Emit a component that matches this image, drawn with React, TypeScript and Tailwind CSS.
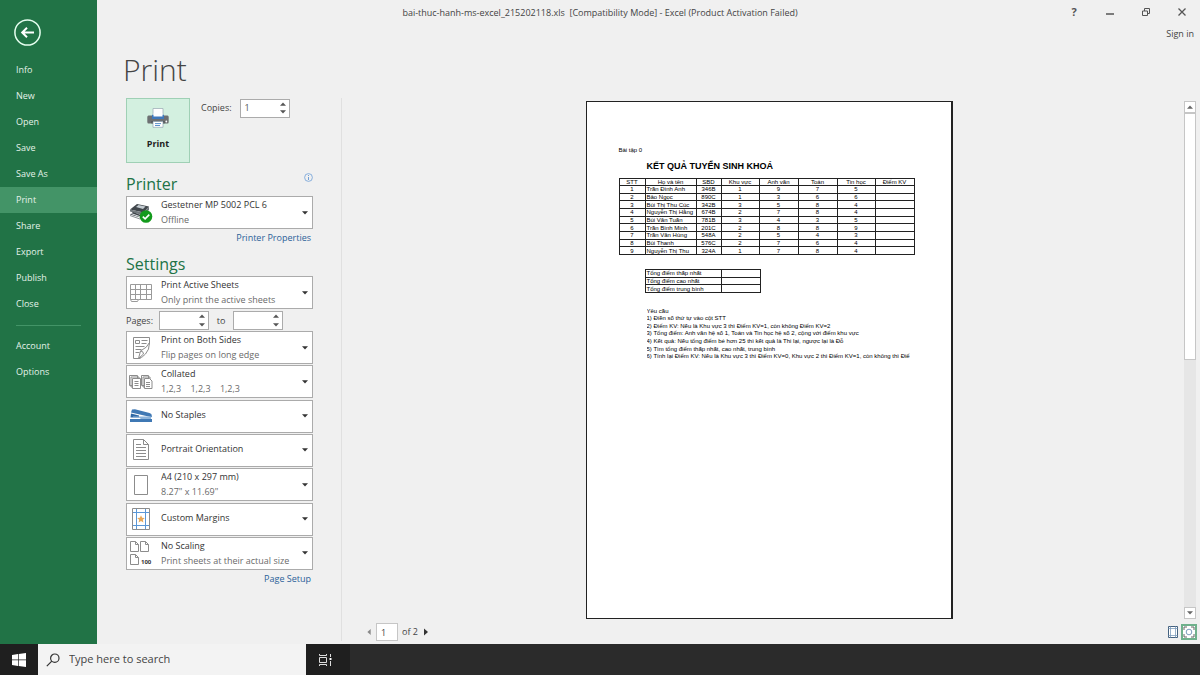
import React from "react";

const menu = ["Info", "New", "Open", "Save", "Save As", "Print", "Share", "Export", "Publish", "Close"];
const lowerMenu = ["Account", "Options"];

const heads = ["STT", "Họ và tên", "SBD", "Khu vực", "Anh văn", "Toán", "Tin học", "Điểm KV"];
const rows = [
  ["1", "Trần Đình Anh", "346B", "1", "9", "7", "5", ""],
  ["2", "Bảo Ngọc", "890C", "1", "3", "6", "6", ""],
  ["3", "Bùi Thị Thu Cúc", "342B", "3", "5", "8", "4", ""],
  ["4", "Nguyễn Thị Hằng", "674B", "2", "7", "8", "4", ""],
  ["5", "Bùi Văn Tuấn", "781B", "3", "4", "3", "5", ""],
  ["6", "Trần Bình Minh", "201C", "2", "8", "8", "9", ""],
  ["7", "Trần Văn Hùng", "548A", "2", "5", "4", "3", ""],
  ["8", "Bùi Thanh", "576C", "2", "7", "6", "4", ""],
  ["9", "Nguyễn Thị Thu", "324A", "1", "7", "8", "4", ""],
];
const notes = [
  "Yêu cầu",
  "1) Điền số thứ tự vào cột STT",
  "2) Điểm KV: Nếu là Khu vực 3 thì Điểm KV=1, còn không Điểm KV=2",
  "3) Tổng điểm: Anh văn hệ số 1, Toán và Tin học hệ số 2, cộng với điểm khu vực",
  "4) Kết quả: Nếu tổng điểm bé hơn 25 thì kết quả là Thi lại, ngược lại là Đỗ",
  "5) Tìm tổng điểm thấp nhất, cao nhất, trung bình",
  "6) Tính lại Điểm KV: Nếu là Khu vực 3 thì Điểm KV=0, Khu vực 2 thì Điểm KV=1, còn không thì Điể",
];

function Caret({ className = "" }: { className?: string }) {
  return (
    <svg viewBox="0 0 6 4" className={`h-1 w-1.5 shrink-0 ${className}`} aria-hidden="true">
      <path d="M0 0.3h6L3 3.6z" fill="currentColor" />
    </svg>
  );
}

function PrinterIcon() {
  return (
    <svg viewBox="0 0 22 20" className="h-5 w-[22px]" aria-hidden="true">
      <path d="M6 0.500h10v8H6z" fill="#fff" stroke="#9fb0b8" strokeWidth="0.800" />
      <path d="M1.500 7.500h19q1.200 0 1.200 1.500v5q0 1.500-1.200 1.500h-19Q.3 15.500.3 14V9q0-1.500 1.200-1.500z" fill="#6d7072" />
      <path d="M5 6.800h12v4.200H5z" fill="#3f79bb" />
      <path d="M6.500 5.500h9v3h-9z" fill="#fff" />
      <path d="M4.500 13h13v2.500h-13z" fill="#4d5052" />
      <path d="M6 13.500h10v5.800H6z" fill="#fff" stroke="#8fa3b3" strokeWidth="0.700" />
      <path d="M8 15.600h6M8 17.500h5" stroke="#4a86c5" strokeWidth="0.900" />
      <circle cx="19.300" cy="13.500" r="0.900" fill="#fff" />
    </svg>
  );
}

function DeviceIcon() {
  return (
    <svg viewBox="0 0 24 20" className="h-5 w-6" aria-hidden="true">
      <path d="M1 6.500 8 1l12 2.500-5.500 6z" fill="#41474c" />
      <path d="M7 4 9.500 2l7 1.500-2.500 2.500z" fill="#c4ccd2" />
      <path d="M1 6.500v2L13 12l7-5V3.500l-5.500 6z" fill="#70777c" />
      <path d="M1 11.500 4 9l9 3.500v2.500z" fill="#3b4146" />
      <path d="M2 10.500 12 14" stroke="#dfe4e8" strokeWidth="1" />
      <path d="m1 12.500 10 3.500" stroke="#8a9095" strokeWidth="1" />
      <circle cx="17" cy="13.500" r="6.300" fill="#139a1c" />
      <path d="m13.800 13.600 2.300 2.300 4.200-4.300" fill="none" stroke="#fff" strokeWidth="1.600" />
    </svg>
  );
}

function SheetsIcon() {
  return (
    <svg viewBox="0 0 24 20" className="h-5 w-6" fill="none" stroke="#9a9a9a" strokeWidth="1" aria-hidden="true">
      <path d="M1.500 1.500h21v15h-13l-1 2h-6l-1-2z" fill="#fff" />
      <path d="M1.500 6.500h21M1.500 11.500h21M6.500 1.500v15M11.500 1.500v15M17.500 1.500v15M1.500 16.500h8" />
    </svg>
  );
}

function BothSidesIcon() {
  return (
    <svg viewBox="0 0 24 24" className="size-6" fill="none" stroke="#8c8c8c" strokeWidth="1" aria-hidden="true">
      <path d="M11.500 22.500h-7v-21h16v7" />
      <path d="M6.500 4.500h4v3h-4zM12.500 4.500h6M12.500 7.500h5M6.500 10.500h9M6.500 13.500h6M6.500 16.500h4" />
      <path d="M20.500 6.500q-2 5-9 8.500l-2 7.500q4-1 7-4.500 4-4 4-11.500zM11.500 15q3 0 3 3l-5 4.500" fill="#fff" />
    </svg>
  );
}

function CollatedIcon() {
  return (
    <svg viewBox="0 0 24 16" className="h-4 w-6" fill="#fff" stroke="#8c8c8c" strokeWidth="1" aria-hidden="true">
      <path d="M.5 1.500h8v10h-8zM2 3h8v10H2z" />
      <path d="M3.500 4.500h8v10h-8zM5.500 7.500h4M5.500 9.500h4M5.500 11.500h4" />
      <path d="M12.500 1.500h7v10h-7zM14 3h7v10h-7z" />
      <path d="M15.500 4.500h5l2.500 2.500v7.500h-7.500zM17 8.500h4M17 10.500h4M17 12.500h4" />
    </svg>
  );
}

function StaplerIcon() {
  return (
    <svg viewBox="0 0 24 16" className="h-4 w-6" aria-hidden="true">
      <path d="M3 1.500 6 1.200 20.500 5q2.500.7 2.300 2.800v1.400L2 4.500z" fill="#3f78b4" />
      <path d="M2 5.500 10 7.500v2H1.500z" fill="#2f68a5" />
      <path d="M4 8.500h18v2.500H12l-2-1.500H4z" fill="#8db4db" />
      <path d="M1 11h22v3H1z" fill="#3f78b4" />
    </svg>
  );
}

function PortraitIcon() {
  return (
    <svg viewBox="0 0 18 24" className="h-6 w-[18px]" fill="none" stroke="#8c8c8c" strokeWidth="1" aria-hidden="true">
      <path d="M1.500 1.500h10l5 5v15h-15zM11.500 1.500v5h5" />
      <path d="M4 6.500h5M4 9.500h10M4 12.500h10M4 15.500h10M4 18.500h10" />
    </svg>
  );
}

function PaperIcon() {
  return (
    <svg viewBox="0 0 16 22" className="h-[22px] w-4" aria-hidden="true">
      <path d="M1.500 1.500h13v19h-13z" fill="none" stroke="#8c8c8c" />
    </svg>
  );
}

function MarginsIcon() {
  return (
    <svg viewBox="0 0 18 24" className="h-6 w-[18px]" fill="none" aria-hidden="true">
      <path d="M.5 1.500h17v21H.5z" stroke="#8c8c8c" />
      <path d="M4.500 2v20M13.500 2v20M1 5.500h16M1 18.500h16" stroke="#5b97d6" />
      <path d="m9 8.200 1.100 2.500 2.700.3-2 1.800.6 2.700L9 14.100l-2.400 1.400.6-2.700-2-1.800 2.700-.3z" fill="#e8a757" />
    </svg>
  );
}

function ScalingIcon() {
  return (
    <svg viewBox="0 0 24 26" className="h-[26px] w-6" aria-hidden="true">
      <path
        d="M1.500 1.500h5l3 3v7h-8zM6.500 1.500v3h3M11.500 1.500h5l3 3v7h-8zM16.500 1.500v3h3M1.500 14.500h5l3 3v7h-8zM6.500 14.500v3h3"
        fill="none"
        stroke="#8c8c8c"
      />
      <text x="12" y="24" fontSize="6" fontWeight="700" fill="#333" fontFamily="Open Sans, sans-serif">
        100
      </text>
    </svg>
  );
}

function Choice({ label, title, sub, icon }: { label: string; title: string; sub?: string; icon: React.ReactNode }) {
  return (
    <div className="grid h-[33px] shrink-0 border border-[#ababab] bg-white">
      <select
        aria-label={label}
        className={`col-start-1 row-start-1 w-full appearance-none pl-[34px] text-[9px] leading-4 text-[#333] outline-none ${sub ? "pb-[15px]" : "pb-[2px]"}`}
      >
        <option>{title}</option>
      </select>
      <div className="pointer-events-none col-start-1 row-start-1 flex items-center pr-1">
        <span className="flex w-7 shrink-0 justify-center">{icon}</span>
        {sub && <span className="self-end whitespace-pre pl-[6px] text-[9px] leading-4 text-[#6a6a6a]">{sub}</span>}
        <Caret className="ml-auto text-[#333]" />
      </div>
    </div>
  );
}

function Spinner({ id, value = "", label }: { id: string; value?: string; label: string }) {
  return (
    <span className="flex h-[19px] w-[50px] border border-[#ababab] bg-white">
      <input id={id} aria-label={label} defaultValue={value} className="w-9 min-w-0 pl-1 text-[9px] text-[#555] outline-none" />
      <span className="flex flex-1 flex-col items-center justify-around text-[#555]">
        <button aria-label={`Increase ${label}`}>
          <Caret className="block rotate-180" />
        </button>
        <button aria-label={`Decrease ${label}`}>
          <Caret className="block" />
        </button>
      </span>
    </span>
  );
}

function Sidebar() {
  return (
    <nav className="w-[97px] shrink-0 bg-[#217346] text-[9px] text-[#e4f2e9]">
      <button aria-label="Back" className="mt-[19px] ml-[14px] block">
        <svg viewBox="0 0 27 27" className="size-[27px]" fill="none" stroke="#e6fff0" aria-hidden="true">
          <circle cx="13.500" cy="13.500" r="12.600" strokeWidth="1.500" />
          <path d="M20 13.500H8.500M13 8.800l-4.800 4.700 4.800 4.700" strokeWidth="2" stroke="#fff" />
        </svg>
      </button>
      <ul className="mt-[11px]">
        {menu.map((m) => (
          <li key={m}>
            <a href="#" className={`flex h-[26px] items-center pl-4 ${m === "Print" ? "bg-[#439467]" : ""}`}>
              {m}
            </a>
          </li>
        ))}
      </ul>
      <hr className="mt-2 mr-4 mb-[7px] ml-4 border-[#439467]" />
      <ul>
        {lowerMenu.map((m) => (
          <li key={m}>
            <a href="#" className="flex h-[26px] items-center pl-4">
              {m}
            </a>
          </li>
        ))}
      </ul>
    </nav>
  );
}

function TitleBar() {
  return (
    <header className="flex h-[46px] shrink-0 text-[9px] text-[#444]">
      <h1 className="ml-[63px] flex-1 whitespace-pre pt-[5px] text-center leading-4">
        {"bai-thuc-hanh-ms-excel_215202118.xls  [Compatibility Mode] - Excel (Product Activation Failed)"}
      </h1>
      <div className="w-40 pr-1.5">
        <div className="flex h-6 items-center justify-end gap-6 pr-1.5 text-[#555]">
          <button aria-label="Help" className="w-3 text-[11px] font-bold">?</button>
          <button aria-label="Minimize">
            <svg viewBox="0 0 12 12" className="size-3"><path d="M2 8h8" stroke="currentColor" strokeWidth="1.500" /></svg>
          </button>
          <button aria-label="Restore">
            <svg viewBox="0 0 12 12" className="size-3" fill="none" stroke="currentColor"><path d="M2.500 5h5v4.500h-5zM4.500 5V2.500h5v5h-2" /></svg>
          </button>
          <button aria-label="Close">
            <svg viewBox="0 0 12 12" className="size-3" stroke="currentColor" strokeWidth="1.300"><path d="m2.500 2.500 7 7m0-7-7 7" /></svg>
          </button>
        </div>
        <a href="#" className="mt-[2px] block text-right leading-4">Sign in</a>
      </div>
    </header>
  );
}

function Settings() {
  return (
    <section className="w-[187px] shrink-0">
      <div className="flex">
        <button className="flex h-[65px] w-16 flex-col items-center border border-[#9fd0b5] bg-[#d3f0e0] pt-[9px] text-[9px] font-bold text-[#222]">
          <PrinterIcon />
          <span className="mt-2 leading-4">Print</span>
        </button>
        <div className="ml-[11px] flex h-5 items-center gap-2 text-[9px] text-[#444]">
          <label htmlFor="copies">Copies:</label>
          <Spinner id="copies" label="Copies" value="1" />
        </div>
      </div>
      <div className="mt-2 flex h-[25px] items-center justify-between">
        <h3 className="text-base text-[#217346]">Printer</h3>
        <button aria-label="Printer information" className="mb-3">
          <svg viewBox="0 0 9 9" className="size-[9px]" fill="none" stroke="#6f9fd8" strokeWidth="0.800">
            <circle cx="4.500" cy="4.500" r="3.900" />
            <path d="M4.500 4v3M4.500 2v1" strokeWidth="1" />
          </svg>
        </button>
      </div>
      <Choice label="Printer" title="Gestetner MP 5002 PCL 6" sub="Offline" icon={<DeviceIcon />} />
      <a href="#" className="mt-[1px] block pr-0.5 text-right text-[9px] leading-4 text-[#2b6199]">Printer Properties</a>
      <h3 className="mt-[6px] text-base text-[#217346]">Settings</h3>
      <Choice label="Print area" title="Print Active Sheets" sub="Only print the active sheets" icon={<SheetsIcon />} />
      <div className="mt-[2px] flex h-[19px] items-center text-[9px] text-[#444]">
        <label htmlFor="from" className="w-[33px]">Pages:</label>
        <Spinner id="from" label="Pages from" />
        <label htmlFor="to" className="w-6 text-center">to</label>
        <Spinner id="to" label="Pages to" />
      </div>
      <div className="mt-[1px] flex h-[239px] flex-col justify-between">
        <Choice label="Sides" title="Print on Both Sides" sub="Flip pages on long edge" icon={<BothSidesIcon />} />
        <Choice label="Collation" title="Collated" sub="1,2,3    1,2,3    1,2,3" icon={<CollatedIcon />} />
        <Choice label="Staples" title="No Staples" icon={<StaplerIcon />} />
        <Choice label="Orientation" title="Portrait Orientation" icon={<PortraitIcon />} />
        <Choice label="Paper size" title="A4 (210 x 297 mm)" sub={'8.27" x 11.69"'} icon={<PaperIcon />} />
        <Choice label="Margins" title="Custom Margins" icon={<MarginsIcon />} />
        <Choice label="Scaling" title="No Scaling" sub="Print sheets at their actual size" icon={<ScalingIcon />} />
      </div>
      <a href="#" className="mt-[1px] block pr-0.5 text-right text-[9px] leading-4 text-[#2b6199]">Page Setup</a>
    </section>
  );
}

function Paper() {
  return (
    <article className="h-[518px] w-[367px] border border-r-2 border-[#222] bg-white pt-[45px] pr-[36px] pl-8 font-['Liberation_Sans',sans-serif] text-[6px] leading-[6px] text-black">
      <p>Bài tập 0</p>
      <h2 className="mt-[7px] ml-7 text-[9px] leading-3 font-bold">KẾT QUẢ TUYỂN SINH KHOÁ</h2>
      <table className="mt-[6px] h-[77px] w-[295px] table-fixed border-collapse">
        <colgroup>
          <col className="w-[26px]" />
          <col className="w-[51px]" />
          <col className="w-[25px]" />
          <col className="w-[38px]" />
          <col className="w-[39px]" />
          <col className="w-[39px]" />
          <col className="w-[38px]" />
          <col className="w-[39px]" />
        </colgroup>
        <thead>
          <tr>
            {heads.map((h) => (
              <th key={h} className="border border-[#222] p-0 text-center font-normal">{h}</th>
            ))}
          </tr>
        </thead>
        <tbody>
          {rows.map((r) => (
            <tr key={r[0]}>
              {r.map((c, i) => (
                <td key={i} className={`border border-[#222] p-0 whitespace-nowrap ${i === 1 ? "pl-px text-left" : "text-center"}`}>{c}</td>
              ))}
            </tr>
          ))}
        </tbody>
      </table>
      <table className="mt-[14px] ml-[26px] h-6 w-[115px] table-fixed border-collapse">
        <colgroup>
          <col className="w-[76px]" />
          <col className="w-[39px]" />
        </colgroup>
        <tbody>
          {["Tổng điểm thấp nhất", "Tổng điểm cao nhất", "Tổng điểm trung bình"].map((t) => (
            <tr key={t}>
              <td className="border border-[#222] p-0 pl-px">{t}</td>
              <td className="border border-[#222] p-0" />
            </tr>
          ))}
        </tbody>
      </table>
      <div className="mt-[14px] ml-7 grid h-[53px] auto-rows-fr items-center overflow-hidden whitespace-nowrap">
        {notes.map((n) => (
          <p key={n}>{n}</p>
        ))}
      </div>
    </article>
  );
}

function ScrollBar() {
  return (
    <div className="flex w-3 flex-col bg-[#e6e6e6] text-[#666]">
      <button aria-label="Scroll up" className="flex h-3 items-center justify-center border border-[#c6c6c6] bg-white">
        <Caret className="rotate-180" />
      </button>
      <div className="h-[247px] border border-[#c6c6c6] bg-white" />
      <button aria-label="Scroll down" className="mt-auto flex h-3 items-center justify-center border border-[#c6c6c6] bg-white">
        <Caret />
      </button>
    </div>
  );
}

function Preview() {
  return (
    <section className="flex min-w-0 flex-1 flex-col border-l border-[#e0e0e0] pt-[3px] pr-1">
      <div className="grid grid-cols-1">
        <div className="col-start-1 row-start-1 flex justify-center">
          <Paper />
        </div>
        <div className="col-start-1 row-start-1 flex justify-end">
          <ScrollBar />
        </div>
      </div>
      <div className="mt-1 flex items-center pl-6 text-[9px] text-[#444]">
        <button aria-label="Previous page">
          <Caret className="rotate-90 text-[#888]" />
        </button>
        <input aria-label="Page" defaultValue="1" className="ml-1 h-[18px] w-[22px] border border-[#c6c6c6] bg-white pl-1 outline-none" />
        <span className="ml-1">of 2</span>
        <button aria-label="Next page" className="ml-1.5">
          <svg viewBox="0 0 4 8" className="h-2 w-1" aria-hidden="true">
            <path d="M0 0.500 4 4 0 7.500z" fill="#333" />
          </svg>
        </button>
        <button aria-label="Show margins" className="mr-[3px] ml-auto">
          <svg viewBox="0 0 10 12" className="h-3 w-2.5" fill="#fff" stroke="#44617e">
            <path d="M.5.5h9v11h-9z" />
            <path d="M2.500.5v11M7.500.5v11M.5 2.500h9M.5 9.500h9" stroke="#7d9dbd" strokeWidth="0.800" />
          </svg>
        </button>
        <button aria-label="Zoom to page" className="-mr-px flex size-4 items-center justify-center border-2 border-[#6fb18c] bg-[#86bfa0]">
          <svg viewBox="0 0 12 12" className="size-3" fill="none" stroke="#666">
            <path d="M0 0h12v12H0z" fill="#fff" stroke="none" />
            <circle cx="6" cy="6" r="2.800" stroke="#7d9dbd" />
            <path d="M1 4V1h3M8 1h3v3M11 8v3H8M4 11H1V8" />
          </svg>
        </button>
      </div>
    </section>
  );
}

function TaskBar() {
  return (
    <footer className="flex h-[31px] shrink-0 bg-[#2b2b2b]">
      <button aria-label="Start" className="flex w-[38px] items-center justify-center bg-[#1f1f1f]">
        <svg viewBox="0 0 14 14" className="size-[14px]" fill="#fff">
          <path d="M0 2l6-.9v5.500H0zM6.700 1 14 0v6.600H6.700zM0 7.300h6v5.600L0 12zM6.700 7.300H14V14l-7.300-1z" />
        </svg>
      </button>
      <label className="flex w-[268px] items-center bg-[#f3f3f3] pl-2">
        <svg viewBox="0 0 14 14" className="size-[14px]" fill="none" stroke="#333" strokeWidth="1.200">
          <circle cx="8.800" cy="5.200" r="4.200" />
          <path d="M5.800 8.200.8 13.200" />
        </svg>
        <input aria-label="Search" placeholder="Type here to search" className="ml-[9px] w-52 text-[11px] outline-none placeholder:text-[#444]" />
      </label>
      <button aria-label="Task view" className="flex w-11 items-center bg-[#1f1f1f] pl-3">
        <svg viewBox="0 0 14 12" className="h-3 w-[14px]" fill="none" stroke="#ddd">
          <path d="M1.500 3.500h7v5h-7zM1.500 0v1.500h7V0M1.500 12v-1.500h7V12M12.500 0v3M12.500 7v5" />
          <path d="M11.500 4h2v2h-2z" fill="#fff" stroke="none" />
        </svg>
      </button>
    </footer>
  );
}

export default function App() {
  return (
    <div className="flex min-h-screen flex-col bg-[#f0f0f0] font-['Open_Sans',sans-serif]">
      <div className="flex flex-1">
        <Sidebar />
        <main className="flex min-w-0 flex-1 flex-col">
          <TitleBar />
          <h2 className="h-[52px] pl-[26px] text-[30px] leading-[48px] font-light text-[#444]">Print</h2>
          <div className="flex flex-1 pb-[3px] pl-[29px]">
            <Settings />
            <div className="w-7 shrink-0" />
            <Preview />
          </div>
        </main>
      </div>
      <TaskBar />
    </div>
  );
}
